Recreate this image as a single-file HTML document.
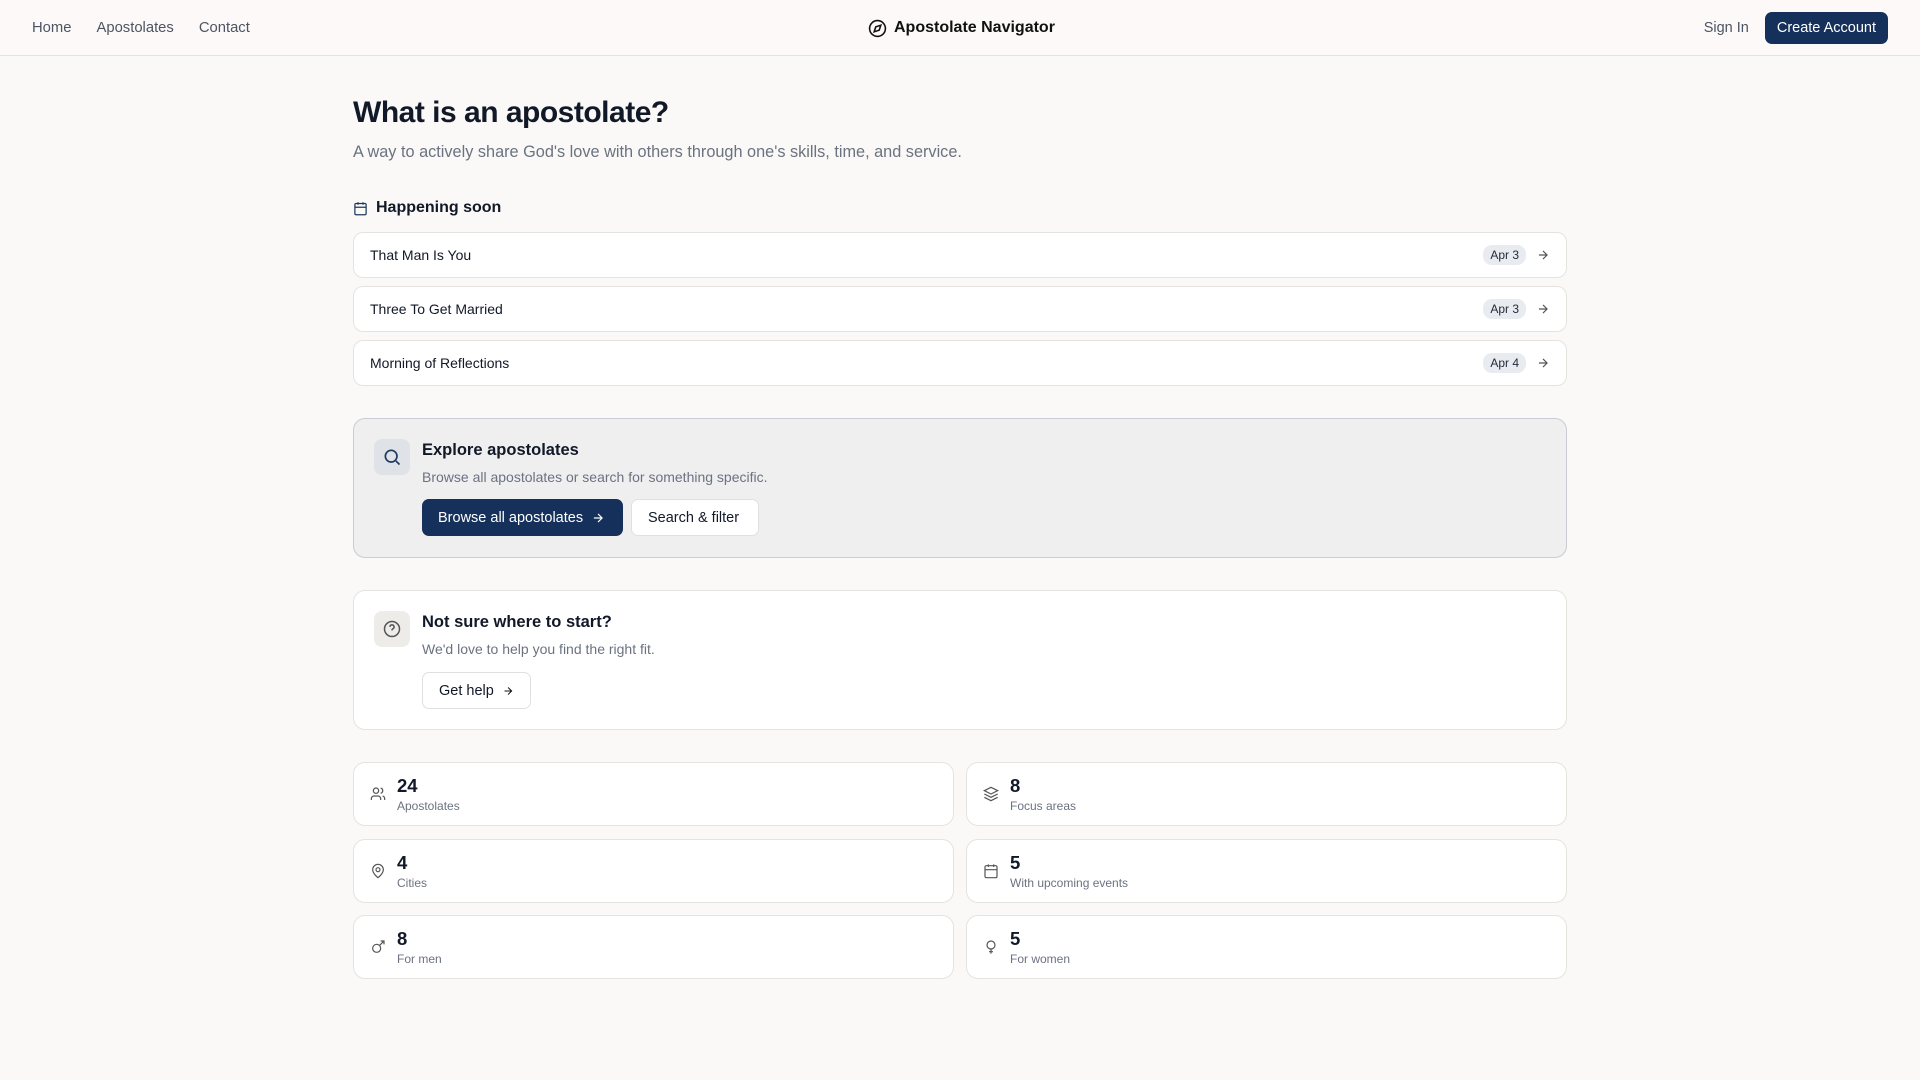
<!DOCTYPE html>
<html><head><meta charset="utf-8"><style>
*{box-sizing:border-box;margin:0;padding:0}
body{width:1920px;height:1080px;background:#faf9f7;font-family:"Liberation Sans",sans-serif;color:#111827;overflow:hidden}
.hdr{height:56px;background:#fdf9f8;border-bottom:1px solid #e6e3df;position:relative}
.nav{position:absolute;left:32px;top:0;height:56px;display:flex;align-items:center;gap:25px;font-size:14.8px;color:#4b5563}
.logo{position:absolute;left:868px;top:0;height:56px;display:flex;align-items:center;gap:7px;font-size:16px;font-weight:bold;color:#111}
.right{position:absolute;right:32px;top:12px;display:flex;align-items:center;gap:16px;font-size:14.5px;color:#4b5563}
.btn-d{background:#15305a;color:#fff;border-radius:7px;height:32px;padding:0 12px;display:flex;align-items:center;font-size:14.5px}
.main{position:absolute;left:353px;width:1214px;top:0}
h1{position:absolute;top:96px;font-size:30px;font-weight:bold;letter-spacing:-0.5px;white-space:nowrap}
.sub{position:absolute;top:143px;font-size:16.3px;color:#6b7280;white-space:nowrap}
.hs{position:absolute;top:199px;display:flex;align-items:center;gap:8px;font-size:16px;font-weight:bold}
.row{position:absolute;left:0;width:1214px;height:46px;background:#fff;border:1px solid #e6e3df;border-radius:10px;display:flex;align-items:center;padding:0 16px;font-size:14px}
.row .b{margin-left:auto;background:#e8ebf0;color:#1f2937;font-size:12px;border-radius:9px;padding:3px 7px}
.row svg{margin-left:10px}
.card{position:absolute;left:0;width:1214px;border-radius:12px}
.ib{position:absolute;left:20px;top:20px;width:36px;height:36px;border-radius:8px;background:#dfe2e7;display:flex;align-items:center;justify-content:center}
.ct{position:absolute;left:68px;top:22px;font-size:16.5px;font-weight:bold}
.cd{position:absolute;left:68px;top:50px;font-size:14px;color:#6b7280}
.bt{position:absolute;top:80px;height:37px;border-radius:7px;display:flex;align-items:center;gap:8px;padding:0 16px;font-size:14.5px;white-space:nowrap}
.st{position:absolute;width:601px;height:64px;background:#fff;border:1px solid #e6e3df;border-radius:12px}
.st svg{position:absolute;left:16px;top:23px}
.st .n{position:absolute;left:43px;top:12px;font-size:18.5px;font-weight:bold}
.st .l{position:absolute;left:43px;top:36px;font-size:12px;color:#6b7280}
</style></head><body>
<div class="hdr">
<div class="nav"><span>Home</span><span>Apostolates</span><span>Contact</span></div>
<div class="logo"><svg width="19" height="19" viewBox="0 0 24 24" fill="none" stroke="#111" stroke-width="2"><circle cx="12" cy="12" r="10"/><path d="M16.2 7.8l-2 6.3-6.4 2.1 2-6.3z"/></svg>Apostolate Navigator</div>
<div class="right"><span>Sign In</span><div class="btn-d">Create Account</div></div>
</div>
<div class="main">
<h1>What is an apostolate?</h1>
<div class="sub">A way to actively share God's love with others through one's skills, time, and service.</div>
<div class="hs"><svg width="15" height="15" viewBox="0 0 24 24" fill="none" stroke="#1e3a5f" stroke-width="2"><rect x="3" y="4" width="18" height="18" rx="2"/><path d="M16 2v4M8 2v4M3 10h18"/></svg>Happening soon</div>
<div class="row" style="top:232px">That Man Is You<span class="b">Apr 3</span><svg width="14" height="14" viewBox="0 0 24 24" fill="none" stroke="#555" stroke-width="2"><path d="M5 12h14M12 5l7 7-7 7"/></svg></div>
<div class="row" style="top:286px">Three To Get Married<span class="b">Apr 3</span><svg width="14" height="14" viewBox="0 0 24 24" fill="none" stroke="#555" stroke-width="2"><path d="M5 12h14M12 5l7 7-7 7"/></svg></div>
<div class="row" style="top:340px">Morning of Reflections<span class="b">Apr 4</span><svg width="14" height="14" viewBox="0 0 24 24" fill="none" stroke="#555" stroke-width="2"><path d="M5 12h14M12 5l7 7-7 7"/></svg></div>
<div class="card" style="top:418px;height:140px;background:#efeff0;border:1px solid #c9ccd2">
<div class="ib"><svg width="20" height="20" viewBox="0 0 24 24" fill="none" stroke="#1e3a5f" stroke-width="2"><circle cx="11" cy="11" r="7"/><path d="M21 21l-4.3-4.3"/></svg></div>
<div class="ct">Explore apostolates</div><div class="cd">Browse all apostolates or search for something specific.</div>
<div class="bt" style="left:68px;width:201px;background:#15305a;color:#fff">Browse all apostolates<svg width="14" height="14" viewBox="0 0 24 24" fill="none" stroke="#fff" stroke-width="2"><path d="M5 12h14M12 5l7 7-7 7"/></svg></div>
<div class="bt" style="left:277px;width:128px;background:#fff;border:1px solid #e0e0e0">Search &amp; filter</div>
</div>
<div class="card" style="top:590px;height:140px;background:#fff;border:1px solid #e6e3df">
<div class="ib" style="background:#eeece9"><svg width="20" height="20" viewBox="0 0 24 24" fill="none" stroke="#555" stroke-width="1.8"><circle cx="12" cy="12" r="9"/><path d="M9.5 9.5a2.5 2.5 0 1 1 3.5 2.3c-.6.3-1 .8-1 1.5v.5M12 17h.01"/></svg></div>
<div class="ct">Not sure where to start?</div><div class="cd">We'd love to help you find the right fit.</div>
<div class="bt" style="left:68px;top:81px;width:109px;background:#fff;border:1px solid #e0e0e0">Get help<svg width="14" height="14" viewBox="0 0 24 24" fill="none" stroke="#111" stroke-width="2"><path d="M5 12h14M12 5l7 7-7 7"/></svg></div>
</div>
<div class="st" style="left:0;top:762px"><svg width="16" height="16" viewBox="0 0 24 24" fill="none" stroke="#555" stroke-width="1.8"><circle cx="9" cy="7" r="4"/><path d="M2 21v-2a4 4 0 0 1 4-4h6a4 4 0 0 1 4 4v2M16 3.1a4 4 0 0 1 0 7.8M22 21v-2a4 4 0 0 0-3-3.9"/></svg><div class="n">24</div><div class="l">Apostolates</div></div>
<div class="st" style="left:613px;top:762px"><svg width="16" height="16" viewBox="0 0 24 24" fill="none" stroke="#555" stroke-width="1.8"><path d="M12 2l10 5-10 5L2 7z M2 12l10 5 10-5 M2 17l10 5 10-5"/></svg><div class="n">8</div><div class="l">Focus areas</div></div>
<div class="st" style="left:0;top:839px"><svg width="16" height="16" viewBox="0 0 24 24" fill="none" stroke="#555" stroke-width="1.8"><path d="M20 10c0 6-8 12-8 12s-8-6-8-12a8 8 0 0 1 16 0z"/><circle cx="12" cy="10" r="3"/></svg><div class="n">4</div><div class="l">Cities</div></div>
<div class="st" style="left:613px;top:839px"><svg width="16" height="16" viewBox="0 0 24 24" fill="none" stroke="#555" stroke-width="1.8"><rect x="3" y="4" width="18" height="18" rx="2"/><path d="M16 2v4M8 2v4M3 10h18M8 14h.01M12 14h.01M16 14h.01M8 18h.01M12 18h.01M16 18h.01"/></svg><div class="n">5</div><div class="l">With upcoming events</div></div>
<div class="st" style="left:0;top:915px"><svg width="16" height="16" viewBox="0 0 24 24" fill="none" stroke="#555" stroke-width="1.8"><circle cx="10" cy="14" r="6"/><path d="M14.5 9.5L21 3M16 3h5v5"/></svg><div class="n">8</div><div class="l">For men</div></div>
<div class="st" style="left:613px;top:915px"><svg width="16" height="16" viewBox="0 0 24 24" fill="none" stroke="#555" stroke-width="1.8"><circle cx="12" cy="9" r="6"/><path d="M12 15v7M9 19h6"/></svg><div class="n">5</div><div class="l">For women</div></div>
</div>
</body></html>
